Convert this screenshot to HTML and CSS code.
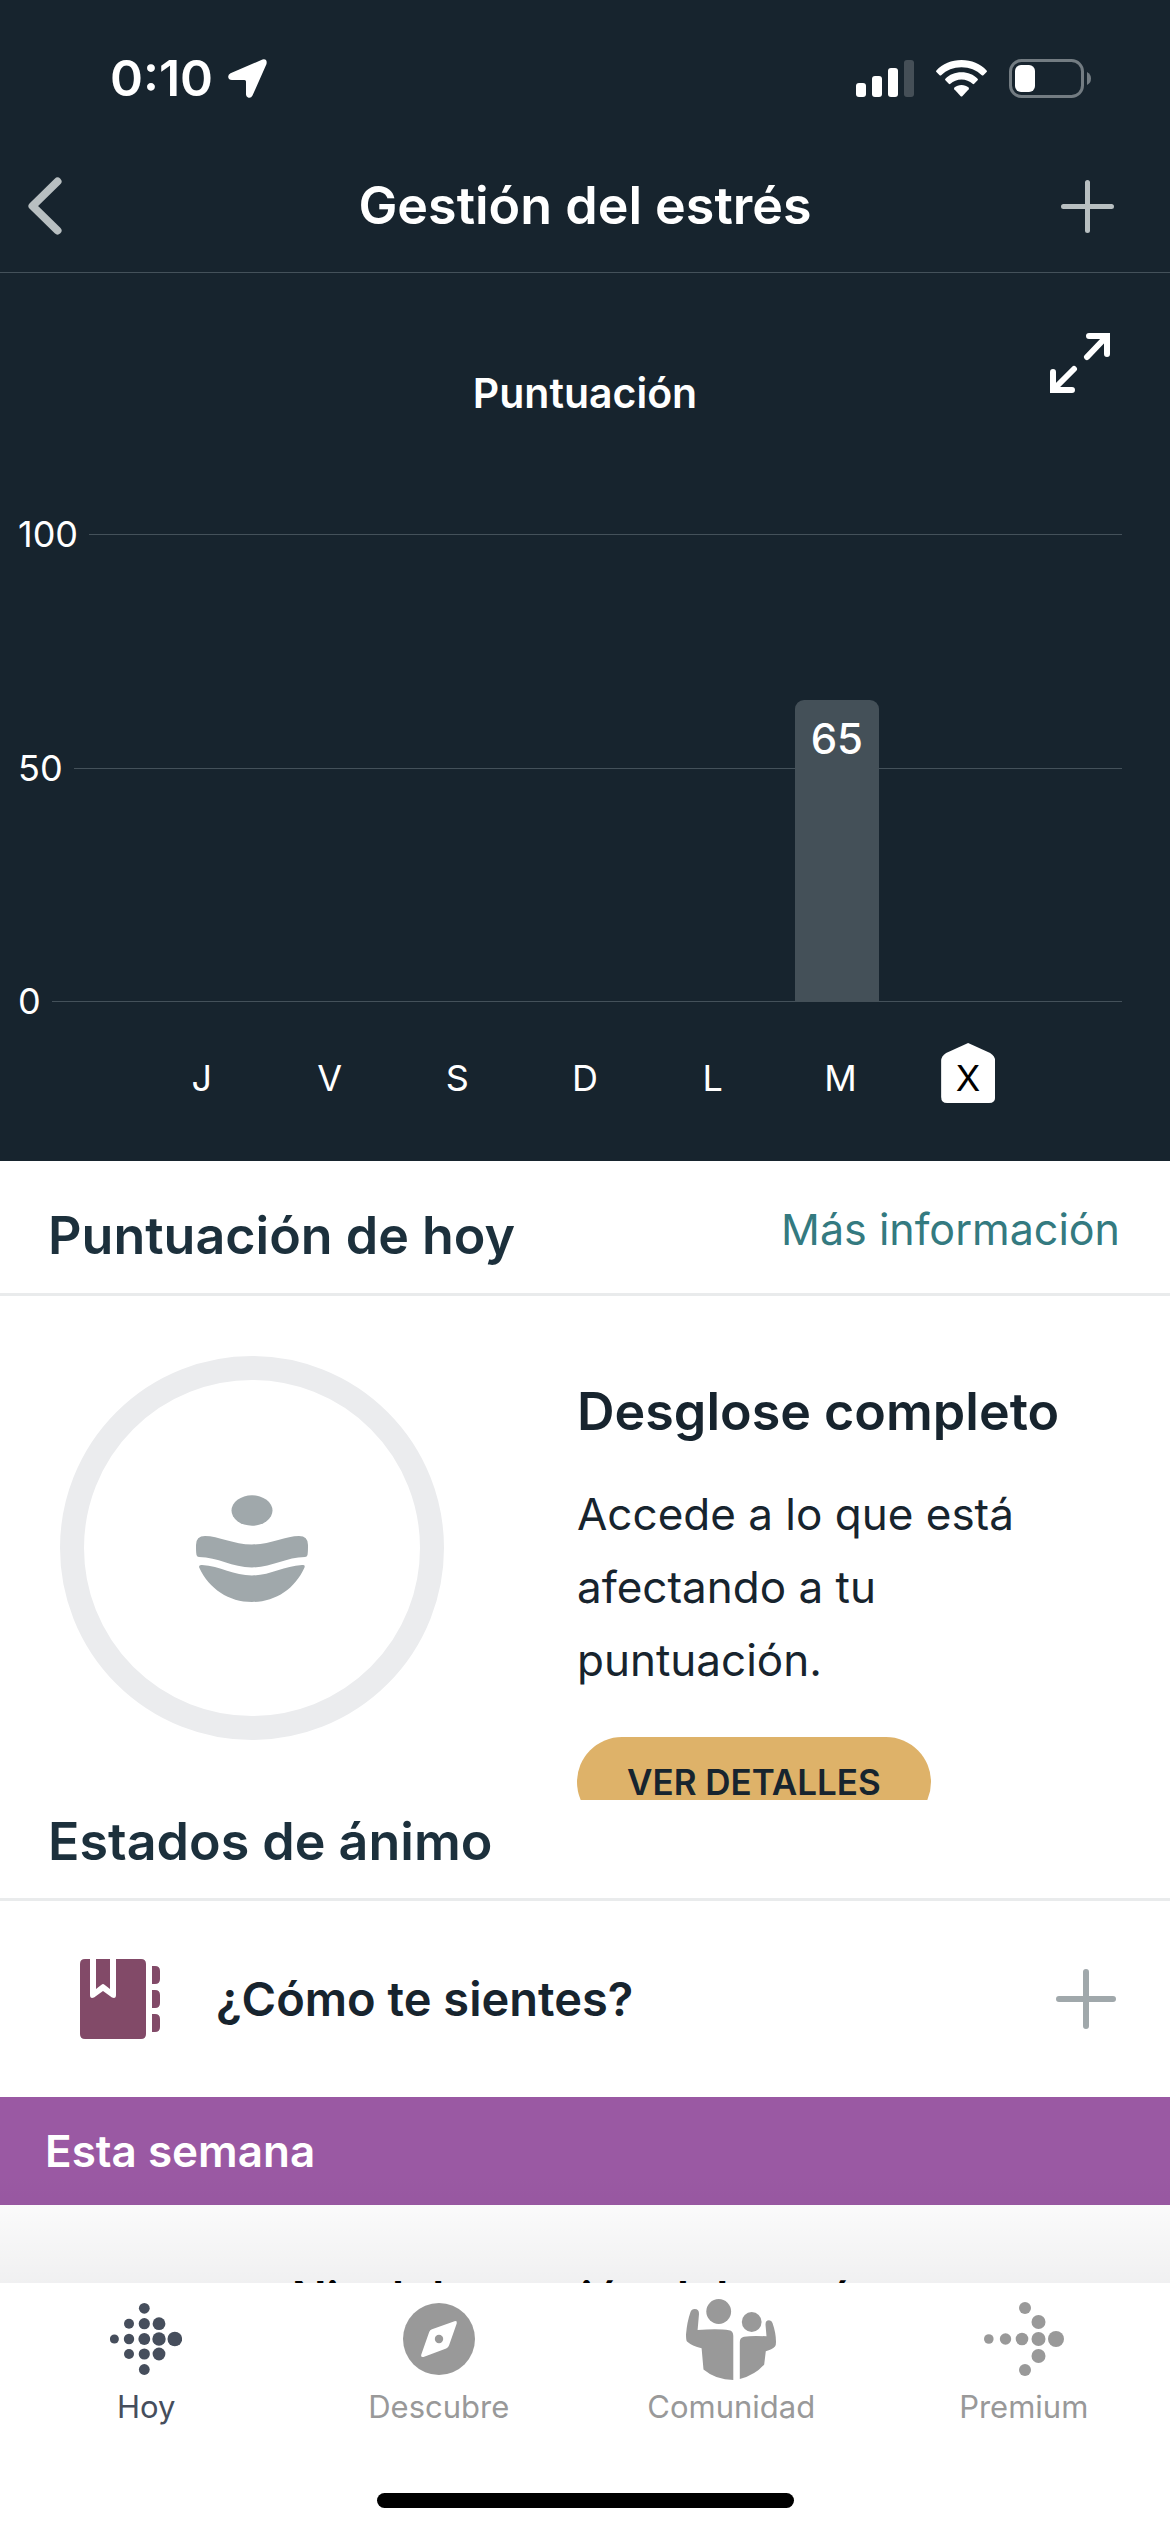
FILE: index.html
```html
<!DOCTYPE html>
<html lang="es">
<head>
<meta charset="utf-8">
<meta name="viewport" content="width=device-width, initial-scale=1">
<title>Gestión del estrés</title>
<link rel="stylesheet" href="styles.css">
</head>
<body>
<div class="app">
  <header class="top">
    <div class="status">
      <div class="status-left">
        <span class="clock">0:10</span>
        <svg width="39" height="39" viewBox="0 0 39 39" aria-hidden="true"><path fill="#fff" d="M34.500.5Q39.500-.5 38.500 5L24.500 36.500Q23 39.500 20 38.500Q18 37.500 18 35.500V22.500Q18 21 16.500 21H4Q.5 21 .2 18Q0 15.500 2.500 14.200Z"/></svg>
      </div>
      <div class="status-right">
        <svg width="58" height="37" viewBox="0 0 58 37" aria-hidden="true"><g fill="#fff"><rect y="23" width="10" height="14" rx="3"/><rect x="16" y="16" width="10" height="21" rx="3"/><rect x="32" y="8" width="10" height="29" rx="3"/><rect x="48" width="10" height="37" rx="3" opacity=".2"/></g></svg>
        <svg width="51" height="37" viewBox="0 0 51 37" aria-hidden="true"><g fill="#fff"><path d="M25.500 0C35.500 0 44.500 4 50.600 10.400Q51.300 11.200 50.600 12L47.400 15.200Q46.600 15.900 45.800 15.200C40.500 10 33.500 7.200 25.500 7.200S10.500 10 5.200 15.200Q4.400 15.900 3.600 15.200L.4 12Q-.3 11.200 .4 10.400C6.500 4 15.500 0 25.500 0Z"/><path d="M25.500 12.300C32 12.300 37.500 14.700 41.600 18.700Q42.400 19.500 41.600 20.300L38.200 23.800Q37.400 24.500 36.600 23.800C33.700 21.100 29.800 19.500 25.500 19.500S17.300 21.100 14.400 23.800Q13.600 24.500 12.800 23.800L9.400 20.300Q8.600 19.500 9.400 18.700C13.500 14.700 19 12.300 25.500 12.300Z"/><path d="M25.500 25C28.300 25 30.700 25.900 32.600 27.500Q33.400 28.300 32.700 29.200L26.300 36.200Q25.500 37 24.700 36.200L18.300 29.200Q17.600 28.300 18.400 27.500C20.300 25.900 22.700 25 25.500 25Z"/></g></svg>
        <svg width="82" height="39" viewBox="0 0 82 39" aria-hidden="true"><rect x="1.500" y="1.500" width="72" height="36" rx="11" fill="none" stroke="#737c82" stroke-width="3"/><rect x="6" y="6" width="20" height="27" rx="6" fill="#fff"/><path fill="#737c82" d="M78 13Q82 15 82 19.500T78 26Z"/></svg>
      </div>
    </div>
    <div class="navbar">
      <button class="icon-button back" type="button" aria-label="Atrás"><svg width="34" height="58" viewBox="0 0 34 58"><path d="M29.500 4.500L4.500 29L29.500 53.500" fill="none" stroke="#b8bfc1" stroke-width="8" stroke-linecap="round" stroke-linejoin="round"/></svg></button>
      <h1 class="navbar-title">Gestión del estrés</h1>
      <button class="icon-button add" type="button" aria-label="Añadir"><svg width="53" height="53" viewBox="0 0 53 53"><path d="M26.500 2.500V50.500M2.500 26.500H50.500" fill="none" stroke="#b8bfc1" stroke-width="5" stroke-linecap="round"/></svg></button>
    </div>
  </header>

  <main class="content">
    <section class="chart">
      <div class="chart-head">
        <h2 class="chart-title">Puntuación</h2>
        <button class="icon-button expand" type="button" aria-label="Ampliar"><svg width="60" height="60" viewBox="0 0 60 60"><path d="M39 3H57V21M57 3L37 24M3 39V57H22M3 57L24 36" fill="none" stroke="#fff" stroke-width="6" stroke-linecap="round" stroke-linejoin="miter"/></svg></button>
      </div>
      <div class="plot">
        <div class="gridlines">
          <div class="gridline">100</div>
          <div class="gridline">50</div>
          <div class="gridline">0</div>
        </div>
        <div class="bars">
          <div class="bar" style="height: 64.5%">65</div>
        </div>
      </div>
      <ol class="days">
        <li>J</li><li>V</li><li>S</li><li>D</li><li>L</li><li>M</li><li><span class="today">X</span></li>
      </ol>
    </section>

    <section>
      <div class="section-head today-head">
        <h2 class="heading">Puntuación de hoy</h2>
        <a class="more" href="#info">Más información</a>
      </div>
      <div class="breakdown">
        <div class="ring">
          <svg width="112" height="107" viewBox="0 0 112 107" aria-hidden="true"><g fill="#a0a8ab"><ellipse cx="56" cy="15.500" rx="20.500" ry="15.200"/><path d="M0 50Q0 41 9 41C22 41 38 49.500 56 49.500S90 41 103 41Q112 41 112 50C112 54 112 57 111.500 60Q111 62 109 62C90 62 76 72.500 56 72.500S22 62 3 62Q1 62 .5 60C0 57 0 54 0 50Z"/><path d="M3.200 72.500Q2.500 69.500 6 70C24 71 38 80.500 56 80.500S88 71 106 70Q109.500 69.500 108.500 72.500C99 94 79 107 56 107S13 94 3.200 72.500Z"/></g></svg>
        </div>
        <div class="breakdown-text">
          <h3 class="heading dark">Desglose completo</h3>
          <p>Accede a lo que está afectando a tu puntuación.</p>
          <button class="pill" type="button">VER DETALLES</button>
        </div>
      </div>
    </section>

    <section>
      <div class="section-head mood-head">
        <h2 class="heading">Estados de ánimo</h2>
      </div>
      <div class="mood">
        <svg width="80" height="80" viewBox="0 0 80 80" aria-hidden="true"><path fill="#824a68" d="M5 0H10V36Q10 40 14 38.500L23 32L32 38.500Q36 40 36 36V0H61Q66 0 66 5V75Q66 80 61 80H5Q0 80 0 75V5Q0 0 5 0ZM16 0H30V30L24.500 25.700Q23 24.500 21.500 25.700L16 30ZM72 7H75Q80 7 80 12V20Q80 25 75 25H72ZM72 31H75Q80 31 80 36V44Q80 49 75 49H72ZM72 55H75Q80 55 80 60V68Q80 73 75 73H72Z"/></svg>
        <h3 class="mood-title">¿Cómo te sientes?</h3>
        <button class="icon-button" type="button" aria-label="Añadir estado de ánimo"><svg width="60" height="60" viewBox="0 0 60 60"><path d="M30 3V57M3 30H57" fill="none" stroke="#a0a8ab" stroke-width="6" stroke-linecap="round"/></svg></button>
      </div>
    </section>

    <section>
      <h2 class="week">Esta semana</h2>
      <h3 class="week-card">Nivel de gestión del estrés</h3>
    </section>
  </main>

  <nav class="tabbar">
    <div class="tabs">
      <a class="tab active" href="#hoy">
        <svg width="72" height="90" viewBox="0 -9 72 90" fill="currentColor" aria-hidden="true"><circle cx="4.400" cy="36" r="4.500"/><circle cx="19" cy="20.700" r="5"/><circle cx="19" cy="36" r="5.200"/><circle cx="19" cy="51" r="5"/><circle cx="34.300" cy="5.300" r="5.400"/><circle cx="34.300" cy="20.700" r="5.600"/><circle cx="34.300" cy="36" r="5.900"/><circle cx="34.300" cy="51" r="5.600"/><circle cx="34.300" cy="66.500" r="5.400"/><circle cx="49" cy="20.700" r="6.400"/><circle cx="49" cy="36" r="6.700"/><circle cx="49" cy="51" r="6.400"/><circle cx="64.800" cy="36" r="7.300"/></svg>
        Hoy
      </a>
      <a class="tab" href="#descubre">
        <svg width="72" height="90" viewBox="0 -9 72 90" fill="currentColor" aria-hidden="true"><circle cx="36" cy="36" r="36"/><path fill="#fff" d="M51.500 18.200Q54.500 17.500 53.700 20.500L46 42.500Q45.300 44.700 43.200 45.500L20.500 53.900Q17.500 54.500 18.300 51.500L26.200 29Q26.900 27 29 26.200Z"/><circle cx="36" cy="36" r="4.200"/></svg>
        Descubre
      </a>
      <a class="tab" href="#comunidad">
        <svg width="90" height="90" viewBox="0 -5 90 90" fill="currentColor" aria-hidden="true"><circle cx="32.700" cy="12.500" r="12.400"/><circle cx="65.700" cy="23" r="9.900"/><path d="M8.600 10Q13.200 10 13 15L11.600 31Q33 29.500 43 31.300Q47.300 32 47.300 37V81Q30 81 17.500 70.500L15.600 49.300Q6 47 1 42.500Q0 41.500 0 35.500Q1 23 4.500 13Q5.500 10 8.600 10Z"/><path d="M53.800 80V43Q53.800 38.500 58 37.700Q66 36.500 80.500 37.300L79.500 25.500Q79.500 21.300 83 21.300Q85.700 21.300 86.500 24Q90 34 90 43Q90 46.500 89 47.500Q86 50.500 79.800 52.300L78.200 65.500Q69 76 53.800 80Z"/></svg>
        Comunidad
      </a>
      <a class="tab" href="#premium">
        <svg width="80" height="90" viewBox="0 -8 80 90" fill="currentColor" aria-hidden="true"><circle cx="4.800" cy="37" r="4.800"/><circle cx="21.500" cy="37" r="5.700"/><circle cx="38" cy="37" r="6.300"/><circle cx="54.500" cy="37" r="7"/><circle cx="72" cy="37" r="8"/><circle cx="54.500" cy="20" r="7"/><circle cx="54.500" cy="54" r="7"/><circle cx="41" cy="6" r="6"/><circle cx="41" cy="68" r="6"/></svg>
        Premium
      </a>
    </div>
    <div class="home-indicator"></div>
  </nav>
</div>
</body>
</html>
```
FILE: styles.css
```css
* { box-sizing: border-box; }

body, h1, h2, h3, p, ol { margin: 0; padding: 0; }

body {
  font-family: Inter, "Liberation Sans", sans-serif;
  background: #fff;
  color: #17242e;
}

h1, h2, h3 { font-weight: 600; }

svg { display: block; flex: none; }

button { font-family: inherit; border: 0; cursor: pointer; }

.icon-button { background: none; padding: 0; }

.app {
  display: flex;
  flex-direction: column;
  height: 100vh;
}

/* Status bar and navigation */
.top { background: #17242e; color: #fff; }

.status {
  display: flex;
  justify-content: space-between;
  align-items: center;
  height: 140px;
  padding: 16px 79px 0 110px;
}

.status-left { display: flex; align-items: center; gap: 15px; }
.status-right { display: flex; align-items: center; gap: 22px; }

.clock { font-size: 50px; font-weight: 600; line-height: 60px; }

.navbar {
  display: grid;
  grid-template-columns: 1fr auto 1fr;
  align-items: center;
  height: 133px;
  padding: 0 28px;
  border-bottom: 1px solid #44515a;
}

.navbar-title { font-size: 52px; line-height: 60px; }
.back { justify-self: start; }
.add { justify-self: end; margin-right: 28px; }

.content { flex: 1; min-height: 0; overflow: hidden; }

/* Weekly chart */
.chart {
  background: #17242e;
  color: #fff;
  padding: 60px 0 58px;
}

.chart-head {
  display: grid;
  grid-template-columns: 1fr auto 1fr;
  align-items: start;
  padding: 0 60px;
  margin-bottom: 93px;
}

.chart-title {
  grid-column: 2;
  margin-top: 30px;
  font-size: 41px;
  line-height: 60px;
}

.expand { justify-self: end; }

.plot { display: grid; height: 504px; }

.gridlines, .bars { grid-area: 1 / 1; }

.gridlines {
  display: flex;
  flex-direction: column;
  justify-content: space-between;
  padding: 0 48px 0 18px;
}

.gridline {
  display: flex;
  align-items: center;
  gap: 11px;
  font-size: 36px;
  line-height: 37px;
}

.gridline::after {
  content: "";
  flex: 1;
  height: 1px;
  background: #44515a;
}

.bars {
  display: grid;
  grid-template-columns: repeat(7, 1fr);
  align-items: end;
  justify-items: center;
  padding: 18px 142px 18px 136px;
}

.bar {
  grid-column: 6;
  width: 84px;
  padding-top: 9px;
  border-radius: 9px 9px 0 0;
  background: #445058;
  font-size: 42px;
  font-weight: 500;
  line-height: 60px;
  text-align: center;
}

.days {
  display: grid;
  grid-template-columns: repeat(7, 1fr);
  justify-items: center;
  margin-top: 23px;
  padding: 0 138px;
  list-style: none;
  font-size: 36px;
  line-height: 50px;
  text-align: center;
}

.days li { padding-top: 10px; }

.today {
  display: block;
  width: 54px;
  height: 60px;
  margin-top: -10px;
  padding-top: 10px;
  background: #fff;
  color: #000;
  clip-path: path("M27 0L49 10Q54 13 54 18V54Q54 60 48 60H6Q0 60 0 54V18Q0 13 5 10Z");
}

/* Sections */
.section-head {
  display: flex;
  justify-content: space-between;
  border-bottom: 3px solid #e9ebec;
}

.today-head { padding: 0 50px 0 48px; }
.today-head .heading { padding: 45px 0 27px; }
.mood-head { padding: 12px 48px 26px; }

.heading { font-size: 52px; line-height: 60px; color: #1c303c; }
.heading.dark { color: #17242e; }

.more {
  align-self: center;
  padding-top: 4px;
  font-size: 43px;
  line-height: 60px;
  color: #347a80;
  text-decoration: none;
}

.breakdown {
  display: flex;
  gap: 133px;
  height: 504px;
  padding: 60px 60px 0;
  overflow: hidden;
}

.ring {
  display: grid;
  place-items: center;
  flex: none;
  width: 384px;
  height: 384px;
  border: 24px solid #ebecee;
  border-radius: 50%;
}

.breakdown-text { padding-top: 26px; }

.breakdown-text p {
  max-width: 460px;
  margin: 36px 0 40px;
  font-size: 44px;
  line-height: 73px;
}

.pill {
  height: 90px;
  padding: 0 50px;
  border-radius: 45px;
  background: #deb269;
  color: #17242e;
  font-size: 35px;
  font-weight: 600;
}

.mood {
  display: flex;
  align-items: center;
  height: 196px;
  padding: 0 54px 0 80px;
}

.mood-title {
  flex: 1;
  margin-left: 56px;
  font-size: 47px;
  line-height: 60px;
}

.week {
  padding: 24px 45px;
  background: #9a59a3;
  color: #fff;
  font-size: 44px;
  line-height: 60px;
}

.week-card {
  padding: 63px 45px;
  color: #000;
  font-size: 46px;
  line-height: 60px;
  text-align: center;
}

/* Tab bar */
.tabbar {
  position: relative;
  padding: 11px 0 24px;
  background: #fff;
}

.tabbar::before {
  content: "";
  position: absolute;
  left: 0;
  right: 0;
  bottom: 100%;
  height: 110px;
  background: linear-gradient(rgba(0, 0, 20, 0), rgba(0, 0, 20, .06));
  pointer-events: none;
}

.tabs { display: grid; grid-template-columns: repeat(4, 1fr); }

.tab {
  display: flex;
  flex-direction: column;
  align-items: center;
  gap: 6px;
  color: #999;
  font-size: 31px;
  line-height: 34px;
  text-decoration: none;
}

.tab.active { color: #464e5c; }

.home-indicator {
  width: 417px;
  height: 15px;
  margin: 69px auto 0;
  border-radius: 8px;
  background: #000;
}
```
